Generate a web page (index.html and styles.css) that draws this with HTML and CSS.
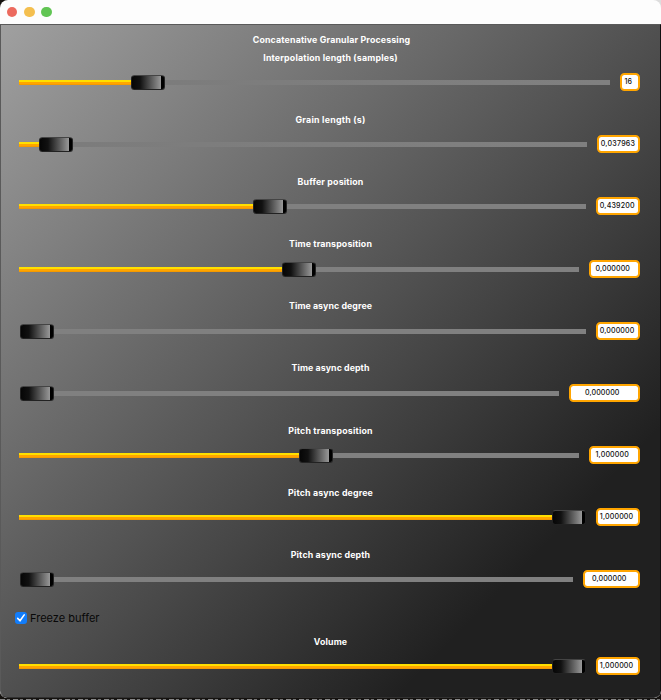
FILE: index.html
```
<!DOCTYPE html>
<html lang="en">
<head>
<meta charset="utf-8">
<title>Concatenative Granular Processing</title>
<link rel="stylesheet" href="styles.css">
</head>
<body>
<div class="window">
  <header class="titlebar"><i class="light close"></i><i class="light minimize"></i><i class="light zoom"></i></header>
  <main class="panel">
    <h1 class="label title"><span class="fit" data-w="157.5">Concatenative Granular Processing</span></h1>
    <div id="controls"></div>
    <label class="check"><span class="box"><svg viewBox="0 0 12 12"><path d="M2.7 6.4 5 8.8 9.2 2.9"/></svg></span><span class="fit" data-w="69.5">Freeze buffer</span></label>
    <div id="volume"></div>
  </main>
</div>
<div class="behind"></div>
<script src="app.js"></script>
</body>
</html>
```
FILE: styles.css
```
* { box-sizing: border-box; }
html { background: linear-gradient(90deg, #15120f 0 600px, #ddd 600px) 0 0 / 100% 20px no-repeat, #15120f; }
body { margin: 0; width: 661px; height: 700px; overflow: hidden; font-family: Inter, "Liberation Sans", sans-serif; }
.window { height: 698px; border-radius: 8px 8px 7px 7px; overflow: hidden; background: #fdfdfd; }
.titlebar { height: 24px; display: flex; align-items: center; gap: 6.4px; padding-left: 6.6px; }
.light { width: 10.8px; height: 10.8px; border-radius: 50%; }
.close { background: #ec6a5e; }
.minimize { background: #f4bf4f; }
.zoom { background: #61c554; }
.panel { height: 674px; padding: 6.1px 20px 0 18px; border: 1px solid #5a5a5a; border-right-color: #111; border-bottom-color: #303030; border-radius: 0 0 7px 7px; background: linear-gradient(to bottom right, #a0a0a0 0%, #202020 80%); }
.label { margin: 0; height: 17px; padding-left: 2px; line-height: 17.8px; text-align: center; color: #fff; font-size: 8.8px; font-weight: 700; white-space: nowrap; }
.title { margin-bottom: 0.5px; padding-left: 4px; line-height: 18.4px; }
.row { height: 62.17px; }
.line { height: 26px; margin-top: 4px; display: flex; align-items: center; gap: 10px; }
.slider { flex: 1; height: 16px; display: flex; align-items: center; }
.filled { height: 5px; background: linear-gradient(#ffe000 0 2px, #ffa500 2px 4px, #f59a00 4px); }
.rest { flex: 1; height: 5px; background: #808080; }
.early .rest { background: linear-gradient(90deg, #7c7c7c, #808080); }
.thumb { flex: none; width: 34px; height: 15px; border: 1px solid #222; border-top-color: #444; border-radius: 3.5px; background: linear-gradient(90deg, #060606 0, #111 25%, #999 91%, #000 91%); }
.value { flex: none; height: 18px; margin-bottom: 1px; border: 2px solid #ffa500; border-radius: 4.5px; background: #fff; color: #111; font-size: 7.1px; font-weight: 500; line-height: 13px; white-space: nowrap; }
.fit { display: inline-block; white-space: nowrap; }
.check { display: flex; align-items: center; gap: 3px; height: 16px; margin: 2px 0 6.8px -4px; font-size: 11px; color: #080808; }
.box { width: 12px; height: 12px; border-radius: 3px; background: #127dfb; }
.box svg { display: block; width: 12px; height: 12px; fill: none; stroke: #fff; stroke-width: 1.6; stroke-linecap: round; stroke-linejoin: round; }
#volume .row { height: 50px; }
.behind { height: 1px; margin-top: 1px; background: repeating-linear-gradient(90deg, #888 0 5px, #222 5px 7px, #777 7px 10px, #151515 10px 13px); }
```
FILE: app.js
```
// name, label width, filled length, value, box width, text inset, text width
const controls = [
  ["Interpolation length (samples)", 134.5, 112, "16", 20, 2.4, 8],
  ["Grain length (s)", 70, 20, "0,037963", 43, 1.7, 34.5],
  ["Buffer position", 66, 234, "0,439200", 44, 1.8, 35],
  ["Time transposition", 83, 263, "0,000000", 51, 4.5, 34.5],
  ["Time async degree", 83, 0, "0,000000", 44, 1.8, 34.5],
  ["Time async depth", 78, 0, "0,000000", 71, 14, 34.5],
  ["Pitch transposition", 84.5, 280, "1,000000", 51, 4.5, 33.5],
  ["Pitch async degree", 85, 533, "1,000000", 44, 1.8, 33.5],
  ["Pitch async depth", 79.5, 0, "0,000000", 57, 7, 34.5]
];
const volume = ["Volume", 33.5, 533, "1,000000", 44, 1.8, 33.5];

const row = ([name, nameWidth, filled, value, width, inset, textWidth]) => `
  <section class="row ${filled < 120 && filled > 0 ? "early" : ""}">
    <div class="label"><span class="fit" data-w="${nameWidth}">${name}</span></div>
    <div class="line">
      <div class="slider"><i class="filled" style="width:${filled || 1}px;${filled ? "" : "visibility:hidden"}"></i><i class="thumb"></i><i class="rest"></i></div>
      <div class="value" style="width:${width}px;padding-left:${inset}px"><span class="fit" data-w="${textWidth}">${value}</span></div>
    </div>
  </section>`;

document.getElementById("controls").innerHTML = controls.map(row).join("");
document.getElementById("volume").innerHTML = row(volume);

// Track each string so that it takes its intended width.
document.querySelectorAll(".fit").forEach(el => {
  const gaps = el.textContent.length;
  const spacing = (el.dataset.w - el.getBoundingClientRect().width) / gaps;
  el.style.letterSpacing = spacing + "px";
});
```
